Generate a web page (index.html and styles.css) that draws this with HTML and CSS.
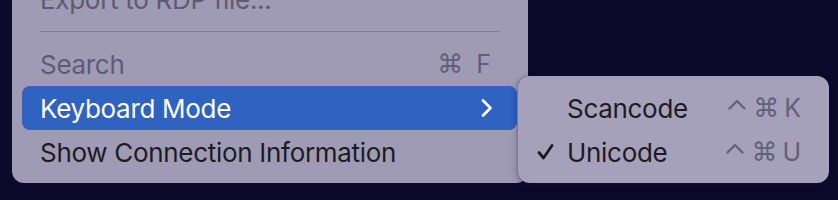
FILE: index.html
```html
<!DOCTYPE html>
<html>
<head>
<meta charset="utf-8">
<link rel="stylesheet" href="styles.css">
</head>
<body>
<div class="stage">
  <div class="menu">
    <div class="item muted">Export to RDP file...</div>
    <div class="sep"></div>
    <div class="item muted"><span class="label">Search</span><span class="short"><span class="cmd">⌘</span><span class="key">F</span></span></div>
    <div class="item active"><span class="label">Keyboard Mode</span>
      <svg class="chev" width="12" height="18" viewBox="0 0 12 18"><path d="M2 1.5 L9.5 9 L2 16.5" fill="none" stroke="#fff" stroke-width="2.6" stroke-linecap="round" stroke-linejoin="round"/></svg>
    </div>
    <div class="item"><span class="label">Show Connection Information</span></div>
  </div>
  <div class="submenu">
    <div class="sitem"><span class="check"></span><span class="label">Scancode</span><span class="sshort"><svg class="ctl" width="18" height="11" viewBox="0 0 18 11"><path d="M1.5 9.5 L9 2 L16.5 9.5" fill="none" stroke="#646079" stroke-width="2.3" stroke-linecap="round" stroke-linejoin="round"/></svg><span class="cmd">⌘</span><span class="key">K</span></span></div>
    <div class="sitem"><span class="check"><svg width="17" height="16" viewBox="0 0 17 16"><path d="M2 8.5 L6.5 14 L15 1.5" fill="none" stroke="#1d1b22" stroke-width="2.8" stroke-linecap="round" stroke-linejoin="round"/></svg></span><span class="label">Unicode</span><span class="sshort"><svg class="ctl" width="18" height="11" viewBox="0 0 18 11"><path d="M1.5 9.5 L9 2 L16.5 9.5" fill="none" stroke="#646079" stroke-width="2.3" stroke-linecap="round" stroke-linejoin="round"/></svg><span class="cmd">⌘</span><span class="key">U</span></span></div>
  </div>
</div>
</body>
</html>
```
FILE: styles.css
```css
html, body {
  margin: 0;
  padding: 0;
  background: #0b0a2b;
  width: 838px;
  height: 200px;
  overflow: hidden;
}
body {
  font-family: Inter, "Noto Sans", "DejaVu Sans", sans-serif;
  font-size: 26px;
  color: #1d1b22;
}
.stage {
  position: relative;
  display: flow-root;
  width: 838px;
  height: 200px;
}
.menu {
  margin-left: 12px;
  margin-top: -29px;
  width: 516px;
  box-sizing: border-box;
  padding: 6px 11px 9px 10px;
  background: #a09bb5;
  border-radius: 0 0 12px 12px;
}
.item {
  height: 44px;
  display: flex;
  align-items: center;
  padding: 0 26px 0 18px;
  border-radius: 8px;
  letter-spacing: -0.3px;
}
.item .label { flex: 1; }
.muted { color: #5e5a73; }
.short {
  display: flex;
  align-items: center;
  color: #625e77;
  letter-spacing: 0;
}
.short .cmd { margin-right: 13px; }
.active {
  background: #2f62c1;
  color: #fff;
}
.chev { margin-right: -2px; }
.sep {
  height: 1px;
  background: #7f7a95;
  margin: 10px 18px 10px 18px;
}
.submenu {
  position: absolute;
  left: 518px;
  top: 76px;
  width: 311px;
  height: 107px;
  box-sizing: border-box;
  padding: 10px 28px 9px 19px;
  background: #a5a1bb;
  border-radius: 12px;
  box-shadow: 0 0 2px rgba(30, 25, 50, 0.45), -2px 2px 6px rgba(30, 25, 50, 0.25);
}
.sitem {
  height: 44px;
  display: flex;
  align-items: center;
  letter-spacing: -0.3px;
}
.check {
  width: 30px;
  display: flex;
  align-items: center;
}
.sitem .label { flex: 1; }
.sshort {
  display: flex;
  align-items: center;
  color: #646079;
  letter-spacing: 0;
}
.ctl {
  margin-right: 7px;
  margin-top: -8px;
}
.cmd {
  font-family: "DejaVu Sans", sans-serif;
  font-size: 26px;
  margin-right: 5px;
}
.key { font-size: 25px; }
```
